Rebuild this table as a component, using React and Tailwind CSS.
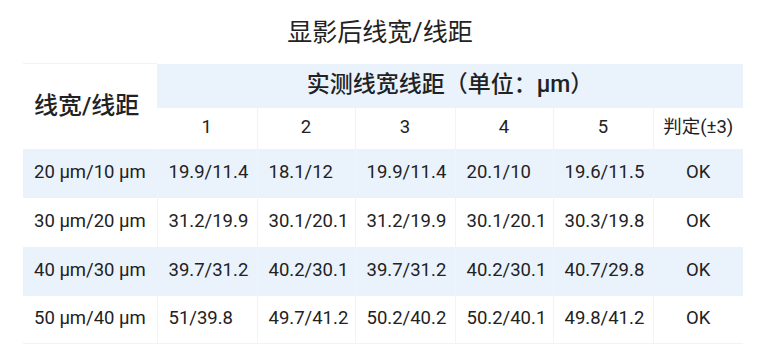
import React from "react";

const rows = [
  ["20 μm/10 μm", "19.9/11.4", "18.1/12", "19.9/11.4", "20.1/10", "19.6/11.5", "OK"],
  ["30 μm/20 μm", "31.2/19.9", "30.1/20.1", "31.2/19.9", "30.1/20.1", "30.3/19.8", "OK"],
  ["40 μm/30 μm", "39.7/31.2", "40.2/30.1", "39.7/31.2", "40.2/30.1", "40.7/29.8", "OK"],
  ["50 μm/40 μm", "51/39.8", "49.7/41.2", "50.2/40.2", "50.2/40.1", "49.8/41.2", "OK"],
];

const widths = ["w-[134px]", "w-[100px]", "w-[98px]", "w-[100px]", "w-[98px]", "w-[100px]", "w-[90px]"];

function App() {
  return (
    <div
      className="w-[760px] h-[360px] bg-white text-[#222] overflow-hidden"
      style={{ fontFamily: "Roboto, 'Noto Sans CJK SC', sans-serif" }}
    >
      <div className="h-[63px] flex items-center justify-center pt-[2px] text-[25px]">
        显影后线宽/线距
      </div>
      <table className="ml-[23px] w-[720px] table-fixed border-collapse">
        <colgroup>
          {widths.map((w, i) => (
            <col key={i} className={w} />
          ))}
        </colgroup>
        <thead>
          <tr className="h-[44px]">
            <th rowSpan={2} className="bg-white text-left pl-[11px] text-[24px] font-medium border-t border-[#f1f3f6]">
              线宽/线距
            </th>
            <th colSpan={6} className="bg-[#eaf3fc] text-[23px] font-medium">
              实测线宽线距（单位：μm）
            </th>
          </tr>
          <tr className="h-[41px] text-[18.5px]">
            {["1", "2", "3", "4", "5"].map((n) => (
              <th key={n} className="font-normal border-r border-[#f1f3f6]">
                {n}
              </th>
            ))}
            <th className="font-normal">判定(±3)</th>
          </tr>
        </thead>
        <tbody className="text-[18.5px]">
          {rows.map((r, i) => (
            <tr key={i} className={(i % 2 === 0 ? "bg-[#eaf3fc] " : "bg-white ") + (i === 3 ? "h-[48px] border-b border-[#f1f3f6]" : "h-[49px]")}>
              {r.map((c, j) => (
                <td
                  key={j}
                  className={
                    "whitespace-nowrap " +
                    (j === 6 ? "text-center" : "text-left pl-[11px]") +
                    (j < 6 ? " border-r border-[#f1f3f6]" : "")
                  }
                >
                  {c}
                </td>
              ))}
            </tr>
          ))}
        </tbody>
      </table>
    </div>
  );
}

export default App;
